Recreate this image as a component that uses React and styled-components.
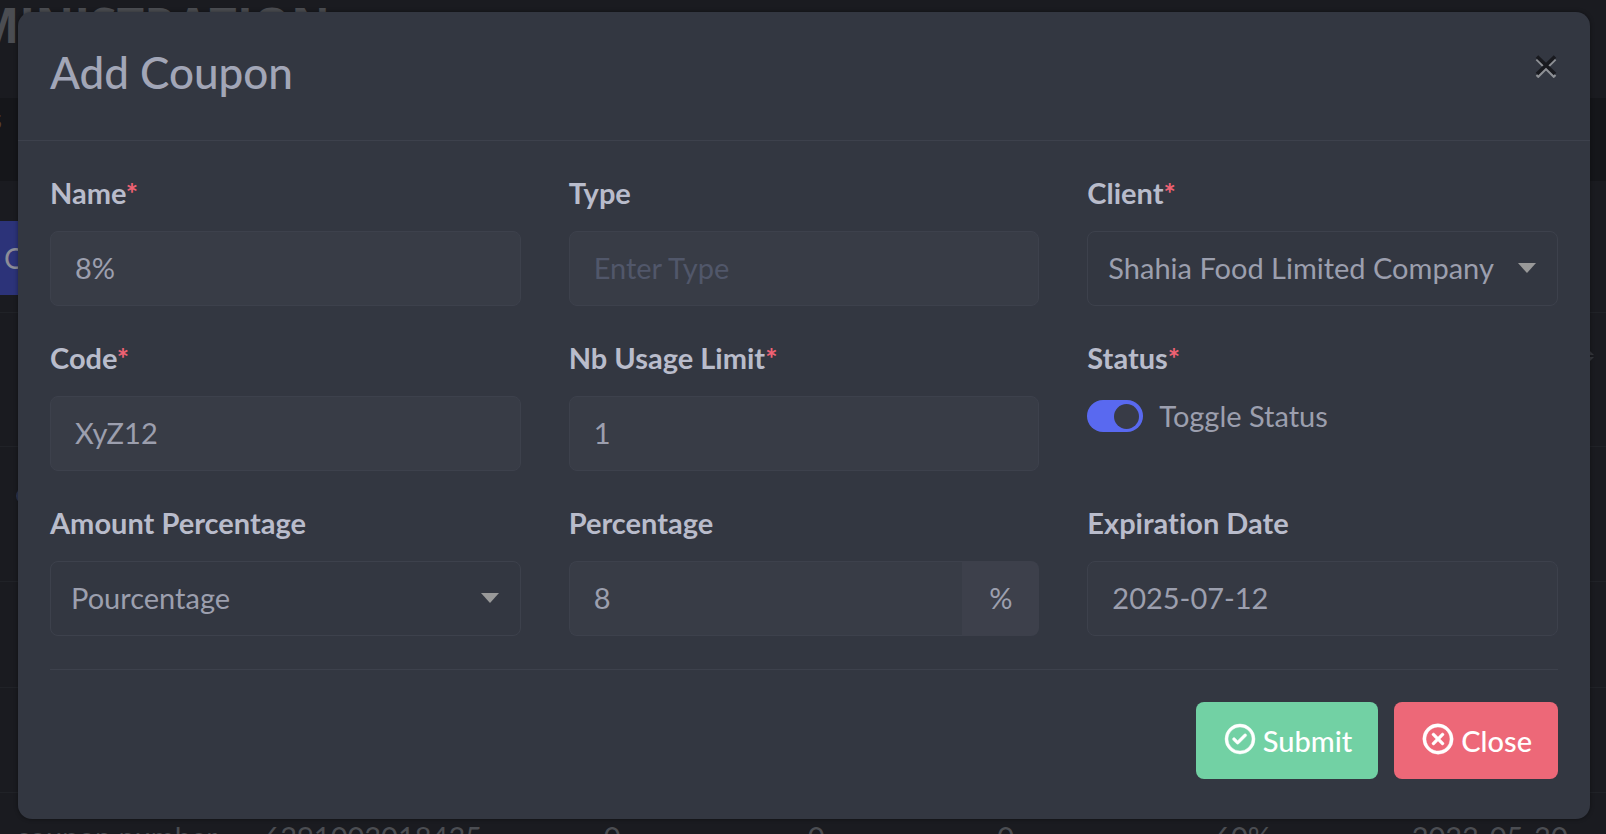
import React, { useState } from 'react';
import styled, { createGlobalStyle, ThemeProvider } from 'styled-components';

const theme = {
  page: '#1a1b20',
  band: '#15161a',
  rule: '#202227',
  dimText: '#4b4d52',
  panel: '#333741',
  field: '#383c46',
  line: '#3d414c',
  addon: '#3d404b',
  text: '#9c9fae',
  title: '#a2a6b7',
  label: '#b9bccb',
  placeholder: '#51576a',
  required: '#ef6273',
  primary: '#5969f0',
  success: '#72d1a4',
  danger: '#ed6878',
};

const GlobalStyle = createGlobalStyle`
  *, *::before, *::after { box-sizing: border-box; }
  body {
    margin: 0;
    background: ${theme.page};
    font-family: Lato, "Open Sans", sans-serif;
    font-size: 29px;
    line-height: 40px;
    font-variant-ligatures: none;
    color: ${theme.text};
  }
  button, input, select { font: inherit; color: inherit; }
`;

const Screen = styled.div`
  position: relative;
  min-height: 100vh;
  display: grid;
`;

/* Dimmed page behind the dialog */

const Backdrop = styled.div`
  position: absolute;
  inset: 0;
  overflow: hidden;
  color: ${(p) => p.theme.dimText};
`;

const PageHeader = styled.header`
  width: 330px;
  height: 98px;
  display: flex;
  justify-content: flex-end;
  overflow: hidden;
`;

const PageTitle = styled.h1`
  margin: 0;
  font-family: "Open Sans", sans-serif;
  font-size: 48px;
  line-height: 50px;
  font-weight: 700;
`;

const NavBand = styled.div`
  height: 83px;
  background: ${(p) => p.theme.band};
`;

const NavItem = styled.div`
  display: flex;
  justify-content: flex-end;
  width: 2px;
  color: #54402c;
`;

const TabStrip = styled.div`
  padding: 40px 0 17px;
`;

const PageTab = styled.button`
  display: block;
  height: 74px;
  padding: 0 4px;
  border: 0;
  background: #2c3379;
  color: #8c8d97;
`;

const DataTable = styled.table`
  width: 100%;
  table-layout: fixed;
  border-collapse: collapse;
`;

const DataRow = styled.tr`
  height: ${(p) => p.$height}px;
  border-top: 1px solid ${(p) => p.theme.rule};
`;

const DataCell = styled.td`
  width: ${(p) => p.$width};
  padding: 24px 0;
  vertical-align: top;
  white-space: nowrap;

  &:first-child { padding-left: 16px; }
`;

const StateDot = styled.span`
  display: block;
  width: 16px;
  height: 16px;
  margin-top: 17px;
  border-radius: 50%;
  background: #2a3450;
`;

const SortMark = styled.svg`
  display: block;
  margin: 12px 12px 0 auto;
`;

/* Dialog */

const Overlay = styled.div`
  position: relative;
  z-index: 1;
  padding: 12px 16px 16px 18px;
`;

const Dialog = styled.section`
  background: ${(p) => p.theme.panel};
  border-radius: 14px;
  box-shadow: 0 0 4px rgba(0, 0, 0, 0.4);
`;

const DialogHeader = styled.header`
  display: flex;
  justify-content: space-between;
  align-items: flex-start;
  height: 129px;
  padding: 32px;
  border-bottom: 1px solid ${(p) => p.theme.line};
`;

const DialogTitle = styled.h2`
  margin: 0;
  font-size: 44px;
  line-height: 56px;
  font-weight: 500;
  color: ${(p) => p.theme.title};
`;

const Dismiss = styled.button`
  display: flex;
  padding: 10px 0;
  border: 0;
  background: none;
`;

const Form = styled.form`
  padding: 32px 32px 40px;
`;

const FieldGrid = styled.div`
  display: grid;
  grid-template-columns: repeat(3, minmax(0, 1fr));
  gap: 32px 48px;
`;

const FieldBox = styled.div`
  display: flex;
  flex-direction: column;
  gap: 19px;
`;

const Label = styled.label`
  line-height: 39px;
  font-weight: 700;
  color: ${(p) => p.theme.label};
`;

const Required = styled.span`
  color: ${(p) => p.theme.required};
`;

const TextInput = styled.input`
  width: 100%;
  height: 75px;
  padding: 0 24px 2px;
  border: 1px solid ${(p) => p.theme.line};
  border-radius: 8px;
  background: ${(p) => (p.$plain ? '#353943' : p.theme.field)};
  outline: 0;

  &::placeholder { color: ${(p) => p.theme.placeholder}; opacity: 1; }
`;

const SelectBox = styled.div`
  position: relative;

  &::after {
    content: '';
    position: absolute;
    top: 32px;
    right: 22px;
    border: solid transparent;
    border-width: 10px 9px 0;
    border-top-color: #999999;
    pointer-events: none;
  }
`;

const Select = styled.select`
  display: block;
  width: 100%;
  height: 75px;
  padding: 0 48px 2px 20px;
  border: 1px solid ${(p) => p.theme.line};
  border-radius: 8px;
  background: transparent;
  appearance: none;
  outline: 0;
`;

const InputGroup = styled.div`
  display: flex;

  ${TextInput} {
    flex: 1;
    min-width: 0;
    border-right: 0;
    border-radius: 8px 0 0 8px;
  }
`;

const Addon = styled.span`
  display: flex;
  align-items: center;
  justify-content: center;
  width: 77px;
  padding-bottom: 2px;
  border-radius: 0 8px 8px 0;
  background: ${(p) => p.theme.addon};
`;

const SwitchRow = styled.label`
  display: flex;
  align-items: center;
  gap: 16px;
`;

const Switch = styled.input`
  appearance: none;
  display: flex;
  align-items: center;
  justify-content: ${(p) => (p.checked ? 'flex-end' : 'flex-start')};
  width: 56px;
  height: 32px;
  margin: 0;
  padding: 0 4px;
  border-radius: 16px;
  background: ${(p) => (p.checked ? p.theme.primary : p.theme.line)};

  &::before {
    content: '';
    width: 25px;
    height: 25px;
    border-radius: 50%;
    background: #383b46;
  }
`;

const Divider = styled.hr`
  height: 1px;
  margin: 33px 0 32px;
  border: 0;
  background: ${(p) => p.theme.line};
`;

const Actions = styled.div`
  display: flex;
  justify-content: flex-end;
  gap: 16px;
`;

const ActionButton = styled.button`
  display: flex;
  align-items: center;
  gap: 5px;
  height: 77px;
  padding: 0 26px;
  border: 0;
  border-radius: 8px;
  background: ${(p) => p.theme[p.$tone]};
  color: #ffffff;
  font-weight: 500;

  svg { margin-bottom: 4px; }
`;

const CrossIcon = () => (
  <svg width="24" height="24" viewBox="0 0 24 24" fill="none" strokeWidth="3.6" aria-hidden="true">
    <path d="M3 5 L21 23 M21 5 L3 23" stroke="#8e9095" />
    <path d="M3 2.5 L21 20 M21 2.5 L3 20" stroke="#191a1f" />
  </svg>
);

const CheckCircle = () => (
  <svg width="36" height="36" viewBox="0 0 24 24" fill="currentColor" stroke="currentColor" strokeWidth="0.3" aria-hidden="true">
    <path d="M14.72,8.79l-4.29,4.3L8.78,11.44a1,1,0,1,0-1.41,1.41l2.35,2.36a1,1,0,0,0,.71.29,1,1,0,0,0,.7-.29l5-5a1,1,0,0,0,0-1.42A1,1,0,0,0,14.72,8.79ZM12,2A10,10,0,1,0,22,12,10,10,0,0,0,12,2Zm0,18a8,8,0,1,1,8-8A8,8,0,0,1,12,20Z" />
  </svg>
);

const TimesCircle = () => (
  <svg width="36" height="36" viewBox="0 0 24 24" fill="currentColor" stroke="currentColor" strokeWidth="0.3" aria-hidden="true">
    <path d="M15.71,8.29a1,1,0,0,0-1.42,0L12,10.59,9.71,8.29A1,1,0,0,0,8.29,9.71L10.59,12l-2.3,2.29a1,1,0,0,0,0,1.42,1,1,0,0,0,1.42,0L12,13.41l2.29,2.3a1,1,0,0,0,1.42,0,1,1,0,0,0,0-1.42L13.41,12l2.3-2.29A1,1,0,0,0,15.71,8.29Zm3.36-3.36A10,10,0,1,0,4.93,19.07,10,10,0,1,0,19.07,4.93ZM17.66,17.66A8,8,0,1,1,20,12,7.95,7.95,0,0,1,17.66,17.66Z" />
  </svg>
);

const SortIcon = () => (
  <SortMark width="12" height="14" viewBox="0 0 12 14" fill="#35373c">
    <path d="M6 0 L12 6 H0 Z M6 14 L12 8 H0 Z" />
  </SortMark>
);

function Field({ id, label, required, children }) {
  return (
    <FieldBox>
      <Label htmlFor={id}>
        {label}
        {required && <Required>*</Required>}
      </Label>
      {children}
    </FieldBox>
  );
}

const columnWidths = ['16.4%', '21.2%', '12.7%', '11.8%', '13.5%', '12.3%', '12.1%'];
const tableRows = [
  { height: 134, cells: ['', '', '', '', '', '', <SortIcon />] },
  { height: 135, cells: [<StateDot />, '', '', '', '', '', ''] },
  { height: 106, cells: ['', '', '', '', '', '', ''] },
  { height: 105, cells: ['', '', '', '', '', '', ''] },
  { height: 105, cells: ['coupon number', '6291003018435', '0', '0', '0', '60%', '2023-05-30'] },
];

function CouponPage() {
  return (
    <Backdrop aria-hidden="true">
      <PageHeader>
        <PageTitle>ADMINISTRATION</PageTitle>
      </PageHeader>
      <NavBand>
        <NavItem>s</NavItem>
      </NavBand>
      <TabStrip>
        <PageTab type="button" tabIndex={-1}>C</PageTab>
      </TabStrip>
      <DataTable>
        <tbody>
          {tableRows.map((row, r) => (
            <DataRow key={r} $height={row.height}>
              {row.cells.map((cell, i) => (
                <DataCell key={i} $width={columnWidths[i]}>{cell}</DataCell>
              ))}
            </DataRow>
          ))}
        </tbody>
      </DataTable>
    </Backdrop>
  );
}

export default function App() {
  const [active, setActive] = useState(true);

  return (
    <ThemeProvider theme={theme}>
      <GlobalStyle />
      <Screen>
        <CouponPage />
        <Overlay>
          <Dialog role="dialog" aria-labelledby="dialog-title">
            <DialogHeader>
              <DialogTitle id="dialog-title">Add Coupon</DialogTitle>
              <Dismiss type="button" aria-label="Dismiss">
                <CrossIcon />
              </Dismiss>
            </DialogHeader>
            <Form onSubmit={(e) => e.preventDefault()}>
              <FieldGrid>
                <Field id="name" label="Name" required>
                  <TextInput id="name" defaultValue="8%" />
                </Field>
                <Field id="type" label="Type">
                  <TextInput id="type" placeholder="Enter Type" />
                </Field>
                <Field id="client" label="Client" required>
                  <SelectBox>
                    <Select id="client">
                      <option>Shahia Food Limited Company</option>
                    </Select>
                  </SelectBox>
                </Field>
                <Field id="code" label="Code" required>
                  <TextInput id="code" defaultValue="XyZ12" />
                </Field>
                <Field id="limit" label="Nb Usage Limit" required>
                  <TextInput id="limit" defaultValue="1" />
                </Field>
                <Field id="status" label="Status" required>
                  <SwitchRow>
                    <Switch
                      id="status"
                      type="checkbox"
                      checked={active}
                      onChange={(e) => setActive(e.target.checked)}
                    />
                    Toggle Status
                  </SwitchRow>
                </Field>
                <Field id="mode" label="Amount Percentage">
                  <SelectBox>
                    <Select id="mode">
                      <option>Pourcentage</option>
                    </Select>
                  </SelectBox>
                </Field>
                <Field id="percentage" label="Percentage">
                  <InputGroup>
                    <TextInput id="percentage" defaultValue="8" />
                    <Addon>%</Addon>
                  </InputGroup>
                </Field>
                <Field id="expiration" label="Expiration Date">
                  <TextInput id="expiration" $plain defaultValue="2025-07-12" />
                </Field>
              </FieldGrid>
              <Divider />
              <Actions>
                <ActionButton type="submit" $tone="success">
                  <CheckCircle />
                  Submit
                </ActionButton>
                <ActionButton type="button" $tone="danger">
                  <TimesCircle />
                  Close
                </ActionButton>
              </Actions>
            </Form>
          </Dialog>
        </Overlay>
      </Screen>
    </ThemeProvider>
  );
}
